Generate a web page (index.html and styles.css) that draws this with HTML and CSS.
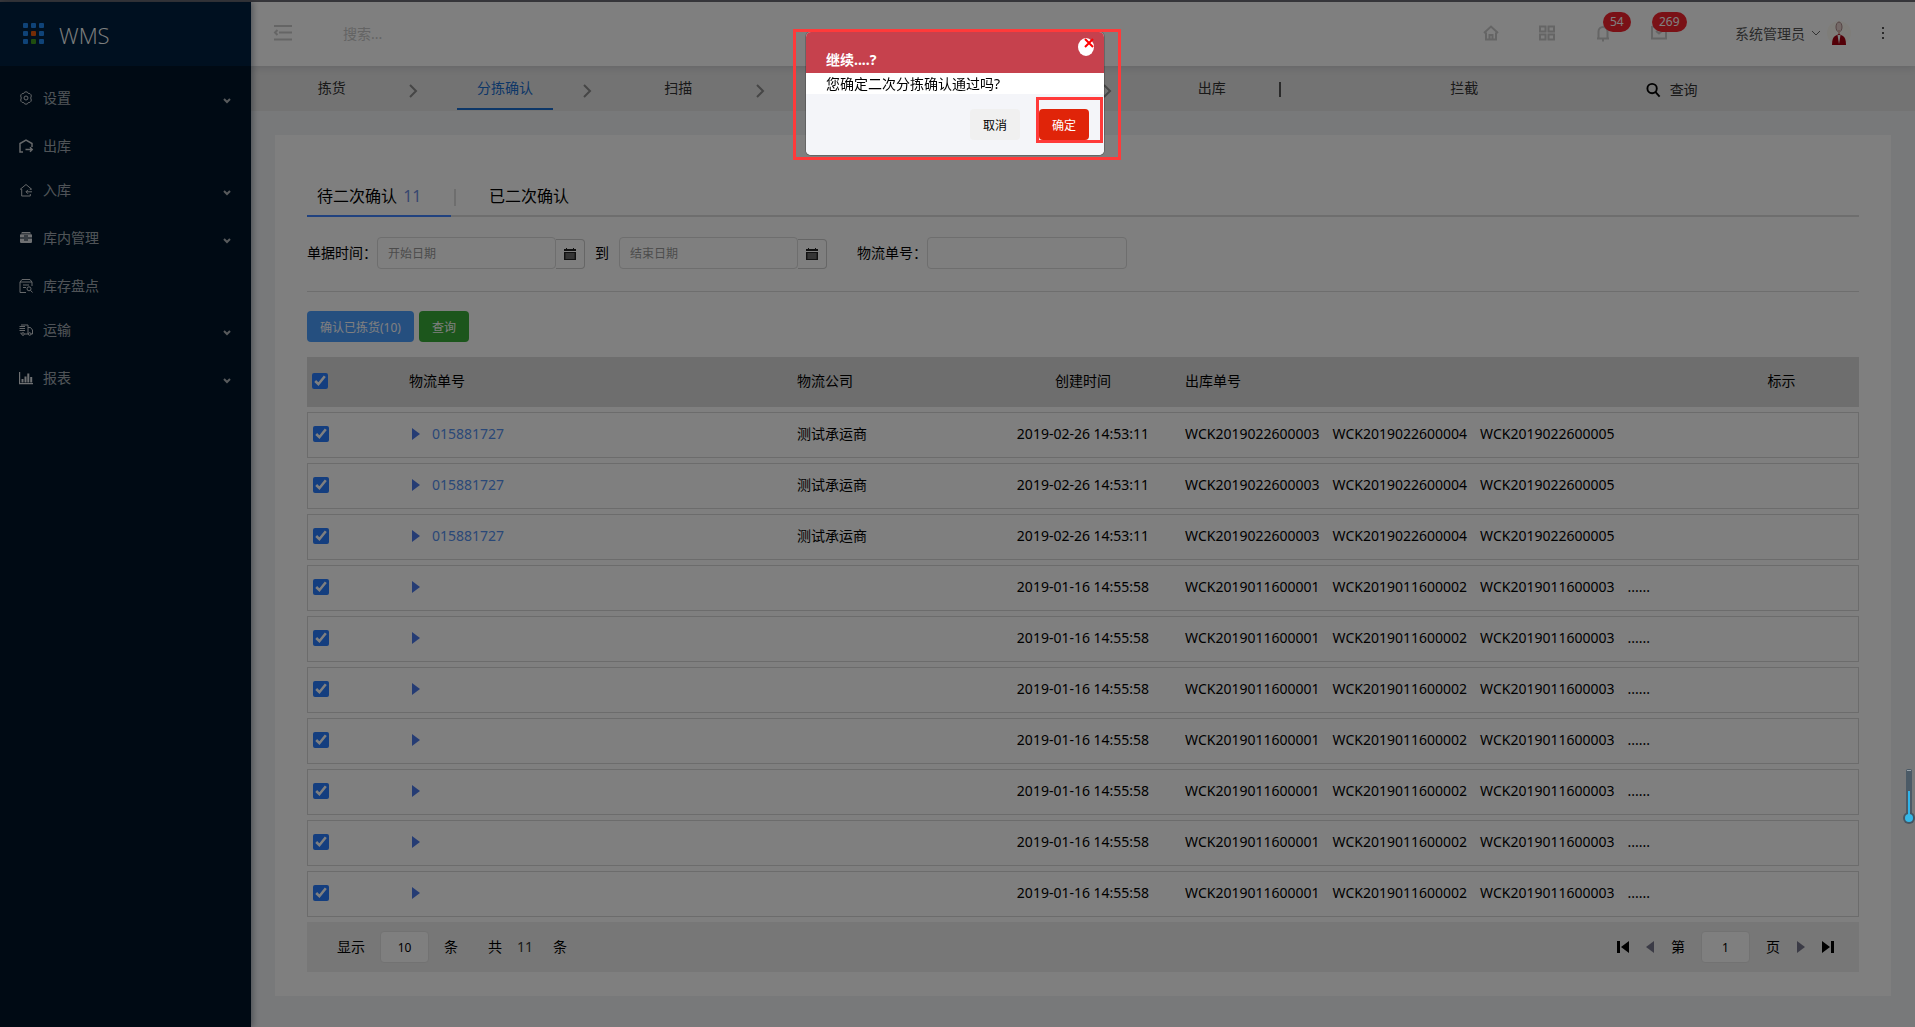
FILE: index.html
```html
<!DOCTYPE html>
<html lang="zh-CN">
<head>
    <meta charset="UTF-8">
    <meta name="viewport" content="width=device-width, initial-scale=1.0">
    <title>WMS - 分拣确认</title>
    <link rel="stylesheet" href="styles.css">
</head>
<body>
    <div class="layout">
        <aside class="sidebar">
            <div class="logo">
                <svg width="22" height="22" viewBox="0 0 22 22">
                    <g fill="#1f86f0">
                        <rect x="0" y="0" width="5" height="5" rx="1"/><rect x="8" y="0" width="5" height="5" rx="1"/><rect x="16" y="0" width="5" height="5" rx="1"/>
                        <rect x="0" y="8" width="5" height="5" rx="1"/><rect x="16" y="8" width="5" height="5" rx="1"/>
                        <rect x="0" y="16" width="5" height="5" rx="1"/><rect x="16" y="16" width="5" height="5" rx="1"/>
                    </g>
                    <rect x="8" y="8" width="5" height="5" rx="1" fill="#e8590c"/>
                    <rect x="8" y="16" width="5" height="5" rx="1" fill="#3f9a1f"/>
                </svg>
                <span>WMS</span>
            </div>
            <nav class="menu">
                <a href="#" class="menu-item">
                    <svg class="menu-icon" viewBox="0 0 14 14"><path d="M5.500 1.200Q7 .4 8.500 1.200L9.300 2.500 10.900 2.600Q12.300 3.500 12.300 5L11.700 7l.6 2Q12.300 10.500 10.900 11.400L9.300 11.500 8.500 12.800Q7 13.600 5.500 12.800L4.700 11.500 3.100 11.400Q1.700 10.500 1.700 9L2.300 7l-.6-2Q1.700 3.500 3.100 2.600L4.700 2.500z"/><circle cx="7" cy="7" r="2"/></svg>
                    <span>设置</span>
                    <svg class="arrow" viewBox="0 0 10 10"><path d="M2 3l3 3 3-3"/></svg>
                </a>
                <a href="#" class="menu-item leaf">
                    <svg class="menu-icon bold" viewBox="0 0 14 14"><path d="M4 13H1V4.500L7 1l6 3.500V8M6.500 10.500H13M11 8.300l2.200 2.200L11 12.700"/></svg>
                    <span>出库</span>
                </a>
                <a href="#" class="menu-item">
                    <svg class="menu-icon" viewBox="0 0 14 14"><path d="M1 6.500L7 1.500l6 5M2.700 6v7h8.600v-2M11.300 5.500v1.500M13 8.800H7M9 6.800l-2 2 2 2"/></svg>
                    <span>入库</span>
                    <svg class="arrow" viewBox="0 0 10 10"><path d="M2 3l3 3 3-3"/></svg>
                </a>
                <a href="#" class="menu-item">
                    <svg class="menu-icon fill" viewBox="0 0 14 14"><path d="M3 1h8l1 1.500H2zM1.500 3.200h11l.5.8v2.600H1V4zM1 7.500h12v3.700l-.8.800H1.800l-.8-.8z"/><path d="M5 4.600h4v1H5zM5 8.600h4v1H5z" fill="#001529"/></svg>
                    <span>库内管理</span>
                    <svg class="arrow" viewBox="0 0 10 10"><path d="M2 3l3 3 3-3"/></svg>
                </a>
                <a href="#" class="menu-item leaf">
                    <svg class="menu-icon" viewBox="0 0 14 14"><path d="M7 13.500H1V3l2-2.500h8L13 3v4M1 3h12M4 6h6M4 8.500h3"/><circle cx="10" cy="9.800" r="2"/><path d="M11.500 11.300l2 2.200"/></svg>
                    <span>库存盘点</span>
                </a>
                <a href="#" class="menu-item">
                    <svg class="menu-icon" viewBox="0 0 14 14"><path d="M2 2h7v9H5.500M.5 3.500H6M.5 5.500H6M.5 7.500H6M9 4.500h2.500l2 2.500v4H12M2 9.500V11"/><circle cx="4" cy="11" r="1.300"/><circle cx="10.700" cy="11" r="1.300"/></svg>
                    <span>运输</span>
                    <svg class="arrow" viewBox="0 0 10 10"><path d="M2 3l3 3 3-3"/></svg>
                </a>
                <a href="#" class="menu-item">
                    <svg class="menu-icon fill" viewBox="0 0 14 14"><path d="M0 1h1.200v11H14v1.200H0zM2.500 8h2v3.500h-2zM5.500 5.500h2v6h-2zM8.300 2.500h2v9h-2zM11.200 6h2v5.500h-2z"/></svg>
                    <span>报表</span>
                    <svg class="arrow" viewBox="0 0 10 10"><path d="M2 3l3 3 3-3"/></svg>
                </a>
            </nav>
        </aside>

        <div class="main">
            <header class="topbar">
                <button class="icon-btn fold" aria-label="收起菜单">
                    <svg width="18" height="16" viewBox="0 0 18 16"><path d="M0 1h18M5 7.500h13M0 14.500h18M3.500 5L1 7.500 3.500 10"/></svg>
                </button>
                <input type="text" class="search" placeholder="搜索..." aria-label="搜索">
                <div class="tools">
                    <button class="icon-btn" aria-label="首页">
                        <svg width="16" height="16" viewBox="0 0 16 16"><path d="M1 8l7-6.500L15 8M3 7.500V14.500h10V7.500M6.500 14V10h3v4"/></svg>
                    </button>
                    <button class="icon-btn" aria-label="应用">
                        <svg width="16" height="16" viewBox="0 0 16 16"><path d="M1 1.500h5.500v5H1zM9.500 1.500H15v5H9.500zM1 9.500h5.500v5H1zM9.500 9.500H15v5H9.500z"/></svg>
                    </button>
                    <button class="icon-btn" aria-label="通知">
                        <svg width="16" height="16" viewBox="0 0 16 16"><path d="M2 13.500h12M3.500 13V6.500a4.500 4.500 0 0 1 9 0V13M7 15.500h2"/></svg>
                        <span class="badge">54</span>
                    </button>
                    <button class="icon-btn" aria-label="消息">
                        <svg width="16" height="16" viewBox="0 0 16 16"><path d="M1 2h14v11.500H1zM5 6l3 2.500L11 6"/></svg>
                        <span class="badge">269</span>
                    </button>
                </div>
                <button class="user">
                    <span>系统管理员</span>
                    <svg width="10" height="10" viewBox="0 0 10 10"><path d="M1 3l4 4 4-4"/></svg>
                    <svg class="avatar" width="24" height="24" viewBox="0 0 24 24">
                        <circle cx="12" cy="12" r="12" fill="#fdfaf3"/>
                        <ellipse cx="12" cy="6" rx="3" ry="5" fill="#e9d3cf" stroke="#a88" />
                        <path d="M11 9h2v6h-2z" fill="#d8b0a8"/>
                        <path d="M5 24c0-5 1-8 3-9l4-2 4 2c2 1 3 4 3 9z" fill="#a80010"/>
                        <path d="M10.500 14h3L12 23z" fill="#fff"/>
                    </svg>
                </button>
                <button class="icon-btn more" aria-label="更多">
                    <svg width="4" height="14" viewBox="0 0 4 14"><path d="M1 1h2v2H1zM1 6h2v2H1zM1 11h2v2H1z"/></svg>
                </button>
            </header>

            <nav class="steps">
                <div class="step"><a href="#">拣货</a><svg viewBox="0 0 12 16"><path d="M3 2l6 6-6 6"/></svg></div>
                <div class="step active"><a href="#">分拣确认</a><svg viewBox="0 0 12 16"><path d="M3 2l6 6-6 6"/></svg></div>
                <div class="step"><a href="#">扫描</a><svg viewBox="0 0 12 16"><path d="M3 2l6 6-6 6"/></svg></div>
                <div class="step empty"><svg viewBox="0 0 12 16"><path d="M3 2l6 6-6 6"/></svg></div>
                <div class="step empty"><svg viewBox="0 0 12 16"><path d="M3 2l6 6-6 6"/></svg></div>
                <div class="step last"><a href="#">出库</a><span class="bar"></span></div>
                <div class="step wide"><a href="#">拦截</a></div>
                <div class="step query">
                    <a href="#">
                        <svg viewBox="0 0 16 16"><circle cx="6.500" cy="6.500" r="5"/><path d="M10 10l4.500 5"/></svg>
                        <span>查询</span>
                    </a>
                </div>
            </nav>

            <main class="card">
                <div class="tabs">
                    <a href="#" class="tab active">待二次确认 <em>11</em></a>
                    <a href="#" class="tab">已二次确认</a>
                </div>

                <form class="filters">
                    <label for="start-date">单据时间：</label>
                    <div class="date">
                        <input type="text" id="start-date" placeholder="开始日期">
                        <button type="button" aria-label="选择开始日期">
                            <svg width="12" height="12" viewBox="0 0 12 12"><path fill="#222" d="M0 1h2V0h1v1h6V0h1v1h2v2H0zM0 4h12v8H0z"/><path stroke="#eee" stroke-width=".4" d="M1 6h10M1 8h10M1 10h10M3 5v6M5 5v6M7 5v6M9 5v6"/></svg>
                        </button>
                    </div>
                    <label for="end-date" class="to">到</label>
                    <div class="date">
                        <input type="text" id="end-date" placeholder="结束日期">
                        <button type="button" aria-label="选择结束日期">
                            <svg width="12" height="12" viewBox="0 0 12 12"><path fill="#222" d="M0 1h2V0h1v1h6V0h1v1h2v2H0zM0 4h12v8H0z"/><path stroke="#eee" stroke-width=".4" d="M1 6h10M1 8h10M1 10h10M3 5v6M5 5v6M7 5v6M9 5v6"/></svg>
                        </button>
                    </div>
                    <label for="tracking" class="tracking-label">物流单号：</label>
                    <input type="text" id="tracking" class="tracking">
                </form>

                <div class="actions">
                    <button class="btn btn-blue">确认已拣货(10)</button>
                    <button class="btn btn-green">查询</button>
                </div>

                <table class="orders">
                    <thead>
                        <tr>
                            <th class="col-check"><input type="checkbox" aria-label="全选" checked></th>
                            <th class="col-no">物流单号</th>
                            <th class="col-company">物流公司</th>
                            <th class="col-time">创建时间</th>
                            <th>出库单号</th>
                            <th class="col-mark">标示</th>
                        </tr>
                    </thead>
                    <tbody id="orders"></tbody>
                </table>

                <div class="pager">
                    <div class="pager-left">
                        <label for="page-size">显示</label>
                        <input type="text" id="page-size" value="10">
                        <span>条</span>
                        <span class="total">共</span>
                        <span class="count">11</span>
                        <span class="unit">条</span>
                    </div>
                    <div class="pager-right">
                        <button aria-label="首页"><svg width="12" height="14" viewBox="0 0 12 14"><path d="M0 1h3v12H0zM12 1v12L4 7z"/></svg></button>
                        <button class="dim" aria-label="上一页"><svg width="10" height="14" viewBox="0 0 10 14"><path d="M9 1v12L1 7z"/></svg></button>
                        <label for="page-no">第</label>
                        <input type="text" id="page-no" value="1">
                        <span>页</span>
                        <button class="dim" aria-label="下一页"><svg width="10" height="14" viewBox="0 0 10 14"><path d="M1 1v12l8-6z"/></svg></button>
                        <button aria-label="末页"><svg width="12" height="14" viewBox="0 0 12 14"><path d="M9 1h3v12H9zM0 1v12l8-6z"/></svg></button>
                    </div>
                </div>
            </main>
        </div>
    </div>

    <div class="overlay">
        <div class="dialog" role="dialog" aria-labelledby="dialog-title">
            <div class="dialog-header">
                <h3 id="dialog-title">继续....?</h3>
                <button class="close" aria-label="关闭">
                    <svg width="10" height="10" viewBox="0 0 10 10"><path d="M1 1l8 8M9 1L1 9"/></svg>
                </button>
            </div>
            <p>您确定二次分拣确认通过吗?</p>
            <div class="dialog-footer">
                <button class="btn btn-cancel">取消</button>
                <button class="btn btn-ok">确定</button>
                <span class="mark mark-ok"></span>
            </div>
            <span class="mark mark-dialog"></span>
        </div>
    </div>

    <svg class="thermometer" width="12" height="56" viewBox="0 0 12 56">
        <rect x="3" y="0" width="6" height="50" rx="2" fill="#4b5a66"/>
        <circle cx="6" cy="49" r="6" fill="#455663"/>
        <path d="M4 1.500h4" stroke="#9aa5ad"/>
        <rect x="5" y="22" width="2" height="26" fill="#2fb4ea"/>
        <circle cx="6" cy="49" r="4" fill="#35b8e8"/>
    </svg>

    <script>
        const feb = { no: "015881727", company: "测试承运商", time: "2019-02-26 14:53:11", codes: ["WCK2019022600003", "WCK2019022600004", "WCK2019022600005"] };
        const jan = { no: "", company: "", time: "2019-01-16 14:55:58", codes: ["WCK2019011600001", "WCK2019011600002", "WCK2019011600003", "......"] };
        const orders = [feb, feb, feb, jan, jan, jan, jan, jan, jan, jan];

        const tbody = document.getElementById("orders");
        orders.forEach((order, i) => {
            const row = document.createElement("tr");
            row.innerHTML = `
                <td><input type="checkbox" aria-label="选择第${i + 1}行" checked></td>
                <td><a href="#" class="order-link"><svg width="10" height="14" viewBox="0 0 10 14"><path d="M1 1v12l8-6z"/></svg>${order.no}</a></td>
                <td>${order.company}</td>
                <td class="col-time">${order.time}</td>
                <td class="codes">${order.codes.map(code => `<span>${code}</span>`).join("")}</td>
                <td></td>`;
            tbody.appendChild(row);
        });
    </script>
</body>
</html>
```
FILE: styles.css
```css
* {
    box-sizing: border-box;
}
body {
    margin: 0;
    font-family: "Noto Sans", "Noto Sans CJK SC", sans-serif;
    font-size: 14px;
    line-height: 20px;
    color: #000;
    background-color: #f0f2f5;
}
a {
    color: inherit;
    text-decoration: none;
}
button, input {
    font-family: inherit;
    font-size: 12px;
    color: inherit;
}
button {
    border: none;
    background: none;
    padding: 0;
    cursor: pointer;
}
svg {
    display: block;
    flex: none;
    overflow: visible;
}
.layout {
    display: flex;
    min-height: 100vh;
    border-top: 2px solid #707078;
}

/* sidebar */
.sidebar {
    flex: 0 0 251px;
    background-color: #001529;
    box-shadow: 2px 0 6px rgba(0, 21, 41, 0.35);
    z-index: 2;
}
.logo {
    display: flex;
    align-items: center;
    gap: 14px;
    height: 64px;
    padding-left: 23px;
    background-color: #002140;
    color: #fff;
    font-family: "Open Sans", sans-serif;
    font-weight: 300;
    font-size: 22px;
}
.logo span {
    padding-top: 2px;
}
.menu {
    padding-top: 8px;
}
.menu-item {
    display: flex;
    align-items: center;
    gap: 10px;
    height: 48px;
    padding: 0 19px;
    color: rgba(255, 255, 255, 0.65);
}
.menu-item.leaf {
    height: 44px;
    padding-top: 4px;
}
.menu-icon {
    width: 14px;
    height: 14px;
    fill: none;
    stroke: #ccd0d4;
}
.menu-icon.bold {
    stroke-width: 1.5;
}
.menu-icon.fill {
    fill: #dde0e4;
    stroke: none;
}
.arrow {
    width: 10px;
    height: 10px;
    margin: 6px 0 0 auto;
    fill: none;
    stroke: #b0b4b8;
    stroke-width: 2;
}

/* top bar */
.main {
    flex: 1;
    min-width: 0;
}
.topbar {
    position: relative;
    display: flex;
    align-items: center;
    height: 64px;
    padding: 0 30px 2px 23px;
    background-color: #fff;
    box-shadow: 0 1px 8px rgba(0, 21, 41, 0.15);
}
.icon-btn {
    position: relative;
}
.icon-btn svg {
    fill: none;
    stroke: #cacaca;
    stroke-width: 2;
}
.search {
    flex: 1;
    min-width: 0;
    margin-left: 49px;
    border: none;
    font-size: 14px;
}
.search::placeholder {
    color: #c8c8c8;
}
.tools {
    display: flex;
    gap: 40px;
}
.badge {
    position: absolute;
    left: 8px;
    bottom: 9px;
    height: 20px;
    padding: 0 7px;
    border-radius: 10px;
    background-color: #f5222d;
    color: #fff;
    line-height: 20px;
}
.icon-btn:last-child .badge {
    left: 1px;
}
.user {
    display: flex;
    align-items: center;
    gap: 6px;
    margin-left: 68px;
    font-size: 14px;
    color: #555;
}
.user svg {
    fill: none;
    stroke: #666;
}
.user .avatar {
    stroke: none;
}
.more {
    margin-left: 30px;
}
.more svg {
    fill: #555;
    stroke: none;
}

/* process steps */
.steps {
    display: flex;
    height: 45px;
    background-color: #e6e6e6;
    color: #333;
}
.step {
    display: flex;
    flex: 0 0 10.4167%;
    justify-content: center;
    padding: 0 5px;
}
.step > a {
    width: 96px;
    margin: 0 auto;
    padding-top: 12px;
    text-align: center;
}
.step.active > a {
    height: 44px;
    border-bottom: 2px solid #1a6fd0;
    color: #1a6fd0;
}
.step > svg {
    width: 12px;
    height: 16px;
    margin-top: 17px;
    fill: none;
    stroke: #8c8c8c;
    stroke-width: 2;
}
.step.empty {
    justify-content: flex-end;
}
.step.last {
    padding-left: 32px;
}
.bar {
    width: 2px;
    height: 15px;
    margin: 16px 5px 0;
    background-color: #555;
}
.step.wide {
    flex-basis: 20.8333%;
}
.step.query {
    justify-content: flex-start;
    padding-left: 8px;
}
.step.query > a {
    display: flex;
    gap: 9px;
    margin: 0;
    padding-top: 14px;
}
.step.query svg {
    width: 15px;
    height: 16px;
    margin-top: 2px;
    fill: none;
    stroke: #000;
    stroke-width: 2;
}

/* content card */
.card {
    margin: 24px;
    padding: 40px 32px 24px;
    background-color: #fff;
}
.tabs {
    display: flex;
    border-bottom: 2px solid #dcdcdc;
    font-size: 16px;
}
.tab {
    position: relative;
    height: 42px;
    margin-bottom: -2px;
    padding: 9px 28px 0 10px;
    line-height: 24px;
}
.tab + .tab {
    padding-left: 38px;
}
.tab.active {
    width: 144px;
    border-bottom: 2px solid #4384ff;
}
.tab em {
    margin-left: 2px;
    font-style: normal;
    color: #6f8fe0;
}
.tab.active::after {
    content: "";
    position: absolute;
    left: 147px;
    top: 14px;
    width: 2px;
    height: 17px;
    background-color: #dcdcdc;
}
.filters {
    display: flex;
    align-items: center;
    height: 75px;
    padding-bottom: 2px;
    border-bottom: 1px solid #dcdcdc;
}
.filters input {
    height: 32px;
    padding: 0 10px;
    border: 1px solid #dcdcdc;
    border-radius: 4px;
    background-color: #fff;
}
.filters input::placeholder {
    color: #999;
}
.filters .date {
    display: flex;
    align-items: flex-end;
}
.filters .date input {
    width: 179px;
}
.filters .date button {
    display: grid;
    place-items: center;
    width: 29px;
    height: 30px;
    border: 1px solid #ccc;
    border-left: none;
    border-radius: 0 4px 4px 0;
}
.filters .to {
    margin: 0 10px;
}
.filters .tracking-label {
    margin-left: 30px;
}
.filters .tracking {
    width: 200px;
}
.actions {
    display: flex;
    gap: 5px;
    padding: 19px 0 10px;
}
.btn {
    height: 31px;
    padding: 0 13px;
    border-radius: 4px;
    color: #fff;
}
.btn-blue {
    background-color: #4a9eff;
}
.btn-green {
    background-color: #38ac38;
}

/* order table */
.orders {
    width: 100%;
    border-collapse: separate;
    border-spacing: 0 5px;
    table-layout: fixed;
}
.orders th {
    height: 50px;
    padding: 0 5px 2px;
    background-color: #dcdcdc;
    font-weight: normal;
    text-align: left;
}
.orders td {
    height: 46px;
    padding: 0 5px 2px;
    border: 1px solid #d9d9d9;
    border-width: 1px 0;
}
.orders td:first-child {
    border-left-width: 1px;
}
.orders td:last-child {
    border-right-width: 1px;
}
.orders input {
    display: block;
    width: 16px;
    height: 16px;
    margin: 0;
    accent-color: #287cff;
}
.orders .col-check {
    width: 6.25%;
}
.orders .col-no {
    width: 25%;
}
.orders .col-company {
    width: 12.5%;
}
.orders .col-time {
    width: 12.5%;
    text-align: center;
    white-space: nowrap;
}
.orders .col-mark {
    width: 10%;
    text-align: center;
}
.order-link {
    display: flex;
    align-items: center;
    gap: 11px;
    padding-left: 2px;
    color: #5590ef;
}
.order-link svg {
    fill: #4a78e8;
}
.codes {
    white-space: nowrap;
}
.codes span {
    margin-right: 13px;
}

/* pager */
.pager {
    display: flex;
    justify-content: space-between;
    height: 50px;
    padding: 0 25px 0 30px;
    background-color: #efefef;
}
.pager-left, .pager-right {
    display: flex;
    align-items: center;
    gap: 16px;
}
.pager-left {
    gap: 15px;
}
.pager input {
    width: 49px;
    height: 32px;
    border: 1px solid #e4e4e4;
    border-radius: 4px;
    background-color: #fff;
    text-align: center;
}
.pager .total {
    margin-left: 15px;
}
.pager .count {
    color: #333;
}
.pager .unit {
    margin-left: 5px;
}
.pager .dim {
    fill: #77778c;
}

/* confirm dialog */
.overlay {
    position: fixed;
    inset: 0;
    z-index: 10;
    display: flex;
    justify-content: center;
    align-items: flex-start;
    padding: 31px 5px 0 0;
    background-color: rgba(0, 0, 0, 0.5);
}
.dialog {
    position: relative;
    width: 300px;
    border: 1px solid rgba(0, 0, 0, 0.2);
    border-radius: 6px;
    background-color: #fff;
    background-clip: padding-box;
}
.dialog-header {
    display: flex;
    justify-content: space-between;
    height: 41px;
    padding: 6px 10px 0 20px;
    border-radius: 5px 5px 0 0;
    background-color: #c6414d;
    color: #fff;
}
.dialog h3 {
    margin: 12px 0 0;
    font-size: 14px;
    line-height: 20px;
}
.close {
    display: flex;
    justify-content: flex-end;
    width: 16px;
    height: 18px;
    border-radius: 50%;
    background-color: #fff;
}
.close svg {
    stroke: #f00;
    stroke-width: 2;
}
.dialog p {
    height: 21px;
    margin: 0;
    padding-left: 20px;
    line-height: 22px;
}
.dialog-footer {
    position: relative;
    display: flex;
    justify-content: flex-end;
    gap: 19px;
    padding: 15px;
    border-radius: 0 0 5px 5px;
    background-color: #f4f5f9;
}
.btn-cancel {
    background-color: #f0f0f0;
    color: #000;
}
.btn-ok {
    background-color: #e02409;
}
.mark {
    position: absolute;
    border: 3px solid #ff3a3a;
    pointer-events: none;
}
.mark-ok {
    top: 3px;
    right: 1px;
    width: 67px;
    height: 46px;
}
.mark-dialog {
    inset: -3px -17px -5px -13px;
}
.thermometer {
    position: fixed;
    right: 0;
    bottom: 202px;
    z-index: 20;
}
```
